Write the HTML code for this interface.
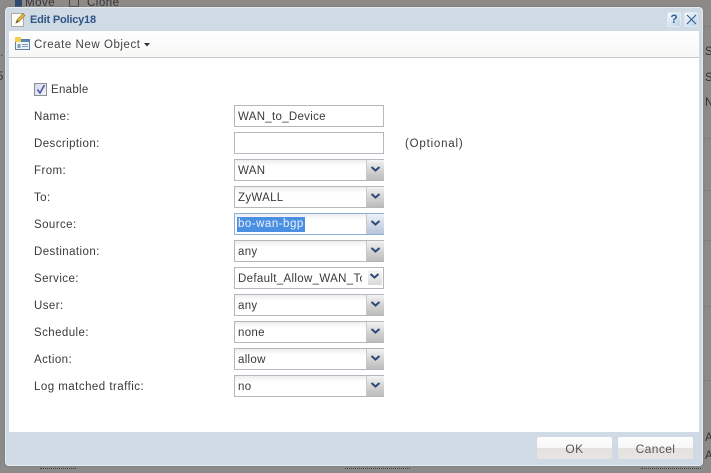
<!DOCTYPE html>
<html><head><meta charset="utf-8"><style>
html,body{margin:0;padding:0}
body{width:711px;height:473px;overflow:hidden;position:relative;background:#8b8b8b;font-family:"Liberation Sans",sans-serif;color:#333}
div,span{position:absolute;box-sizing:border-box;white-space:nowrap}
.lb{left:34px;font-size:11.5px;line-height:14px;letter-spacing:.42px;color:#3a3a3a}
.f{left:234px;width:150px;height:22px;background:#fff;border:1px solid #b4b8bc;font-size:11.5px;line-height:22px;padding-left:3px;letter-spacing:.3px;color:#3a3a3a}
.s{background:linear-gradient(#eeeeee,#fff 30%)}
.a{left:131px;top:0;width:18px;height:20px;background:linear-gradient(#f2f3f4,#d4d4d4 50%,#bcbcbc);border-left:1px solid #c8c8c8}
.a svg{position:absolute;left:3px;top:4px}
.sel{border-color:#8fb0d6}
.b{top:437px;height:22px;width:75px;border-radius:2px;background:linear-gradient(#fdfdfd 0,#f7f7f7 50%,#e4e2df 50%,#e7e5e2);text-align:center;font-size:12px;line-height:24px;letter-spacing:.4px;color:#555}
.d{height:0;border-top:1px dotted #3f3f3f;top:468px}
.r{left:704px;width:7px;height:1px;background:#7f7f7f}
.e{font-size:11.5px;line-height:14px;color:#333}
</style></head><body>
<div style="left:0;top:0;width:711px;height:8px;background:#8d8a88"></div>
<span style="left:25px;top:-4px;font-size:11.5px;line-height:14px;color:#333;letter-spacing:.5px">Move</span>
<span style="left:87px;top:-4px;font-size:11.5px;line-height:14px;color:#333;letter-spacing:.5px">Clone</span>
<div style="left:15px;top:0;width:7px;height:7px;background:#2d4a6e"></div>
<div style="left:69px;top:0;width:10px;height:7px;border:1px solid #444;border-top:0"></div>
<span class="e" style="left:0;top:46px;color:#444">.</span>
<span class="e" style="left:-3px;top:70px;color:#333">5</span>
<div class="d" style="left:40px;width:36px"></div>
<div class="d" style="left:345px;width:65px"></div>
<div class="d" style="left:641px;width:60px"></div>
<div class="r" style="top:26px"></div>
<div class="r" style="top:138px"></div>
<div class="r" style="top:190px"></div>
<div class="r" style="top:240px"></div>
<div class="r" style="top:306px"></div>
<div class="r" style="top:380px"></div>
<span class="e" style="left:705px;top:45px">S</span>
<span class="e" style="left:705px;top:71px">S</span>
<span class="e" style="left:705px;top:96px">N</span>
<span class="e" style="left:705px;top:431px">A</span>
<span class="e" style="left:705px;top:449px">A</span>

<div style="left:5px;top:7px;width:698px;height:459px;background:#cfdae4;border:1px solid #e6ebf0;border-radius:4px;box-shadow:0 0 2px #777"></div>

<!-- title -->
<svg style="position:absolute;left:11px;top:12px" width="15" height="15" viewBox="0 0 15 15"><rect x=".5" y="1.500" width="12" height="13" fill="#fdfbf2" stroke="#aaa"/><path d="M5 11l1-3 6-6.500 2 2-6 6z" fill="#e6b93c" stroke="#a07a20" stroke-width=".7"/><path d="M5 11l1-3 2 1.500z" fill="#555"/></svg>
<span style="left:30px;top:13px;font-size:11px;line-height:14px;font-weight:bold;color:#2f5587;letter-spacing:-.2px">Edit Policy18</span>
<div style="left:667px;top:12px;width:14px;height:15px;border-radius:2px;background:linear-gradient(135deg,#f4f8fc,#bcd4ea);border:1px solid #dfe9f2;font-size:12px;line-height:13px;font-weight:bold;text-align:center;color:#3a5f8e">?</div>
<div style="left:684px;top:12px;width:14px;height:15px;border-radius:2px;background:linear-gradient(135deg,#f4f8fc,#bcd4ea);border:1px solid #dfe9f2"><svg style="position:absolute;left:1px;top:1px" width="11" height="11" viewBox="0 0 11 11"><path d="M1 1l9 9M10 1l-9 9" stroke="#2f5587" stroke-width="1"/></svg></div>

<!-- toolbar -->
<div style="left:9px;top:31px;width:690px;height:27px;background:linear-gradient(#fff,#f8f7f6);border-bottom:1px solid #c9c8c6"></div>
<svg style="position:absolute;left:15px;top:37px" width="15" height="13" viewBox="0 0 15 13"><rect x=".5" y="2.500" width="14" height="10" fill="#eef3f8" stroke="#5a7fa8"/><rect x="1" y="3" width="13" height="2" fill="#5a86b4"/><rect x="2.500" y="7" width="3" height="4" fill="#7d9dc0"/><path d="M7 7.500h6M7 9.500h6" stroke="#7d9dc0"/><rect x="0" y="0" width="6" height="5" fill="#f2d04a"/></svg>
<span style="left:34px;top:38px;font-size:11.5px;line-height:14px;letter-spacing:.55px;color:#444">Create New Object</span>
<svg style="position:absolute;left:144px;top:43px" width="6" height="4"><path d="M0 0h6L3 3.500z" fill="#333"/></svg>

<!-- content -->
<div style="left:9px;top:58px;width:690px;height:374px;background:#fff"></div>

<div style="left:34px;top:83px;width:13px;height:13px;background:linear-gradient(135deg,#d7d9ea,#f2f3fa);border:1px solid #8a8e96"><svg style="position:absolute;left:1px;top:0" width="10" height="11" viewBox="0 0 10 11"><path d="M1.500 5.500l2.500 3.500 4.500-8" fill="none" stroke="#4a5aa8" stroke-width="1.600"/></svg></div>
<span class="lb" style="left:51px;top:83px;letter-spacing:.3px">Enable</span>

<span class="lb" style="top:110px">Name:</span>
<span class="lb" style="top:137px">Description:</span>
<span class="lb" style="top:164px">From:</span>
<span class="lb" style="top:191px">To:</span>
<span class="lb" style="top:218px">Source:</span>
<span class="lb" style="top:245px">Destination:</span>
<span class="lb" style="top:272px">Service:</span>
<span class="lb" style="top:299px">User:</span>
<span class="lb" style="top:326px">Schedule:</span>
<span class="lb" style="top:353px">Action:</span>
<span class="lb" style="top:380px;letter-spacing:.47px">Log matched traffic:</span>

<div class="f" style="top:105px">WAN_to_Device</div>
<div class="f" style="top:132px"></div>
<span class="lb" style="left:405px;top:137px;letter-spacing:.8px">(Optional)</span>

<div class="f s" style="top:159px">WAN<div class="a"><svg width="11" height="10" viewBox="0 0 11 10"><path d="M1.500 3l4 3.500 4-3.500" fill="none" stroke="#2f4a78" stroke-width="2"/></svg></div></div>
<div class="f s" style="top:186px">ZyWALL<div class="a"><svg width="11" height="10" viewBox="0 0 11 10"><path d="M1.500 3l4 3.500 4-3.500" fill="none" stroke="#2f4a78" stroke-width="2"/></svg></div></div>
<div class="f s sel" style="top:213px"><span style="left:2px;top:3px;height:15px;background:#4a90e2;color:#eaf1fb;line-height:15px;padding:0 1px;letter-spacing:.5px">bo-wan-bgp</span><div class="a" style="background:linear-gradient(#eef3f8,#d0dbe7 50%,#b4c5d8)"><svg width="11" height="10" viewBox="0 0 11 10"><path d="M1.500 3l4 3.500 4-3.500" fill="none" stroke="#2f4a78" stroke-width="2"/></svg></div></div>
<div class="f s" style="top:240px">any<div class="a"><svg width="11" height="10" viewBox="0 0 11 10"><path d="M1.500 3l4 3.500 4-3.500" fill="none" stroke="#2f4a78" stroke-width="2"/></svg></div></div>
<div class="f s" style="top:267px;overflow:hidden;background:#fff"><span style="left:3px;top:0;width:124px;overflow:hidden;letter-spacing:.33px">Default_Allow_WAN_To_</span><div class="a" style="left:133px;top:2px;width:14px;height:15px;background:linear-gradient(#f6f7f8,#d9d9d9);border:0"><svg style="left:1px;top:1px" width="11" height="10" viewBox="0 0 11 10"><path d="M1.500 3l4 3.500 4-3.500" fill="none" stroke="#2f4a78" stroke-width="2"/></svg></div></div>
<div class="f s" style="top:294px">any<div class="a"><svg width="11" height="10" viewBox="0 0 11 10"><path d="M1.500 3l4 3.500 4-3.500" fill="none" stroke="#2f4a78" stroke-width="2"/></svg></div></div>
<div class="f s" style="top:321px">none<div class="a"><svg width="11" height="10" viewBox="0 0 11 10"><path d="M1.500 3l4 3.500 4-3.500" fill="none" stroke="#2f4a78" stroke-width="2"/></svg></div></div>
<div class="f s" style="top:348px">allow<div class="a"><svg width="11" height="10" viewBox="0 0 11 10"><path d="M1.500 3l4 3.500 4-3.500" fill="none" stroke="#2f4a78" stroke-width="2"/></svg></div></div>
<div class="f s" style="top:375px">no<div class="a"><svg width="11" height="10" viewBox="0 0 11 10"><path d="M1.500 3l4 3.500 4-3.500" fill="none" stroke="#2f4a78" stroke-width="2"/></svg></div></div>

<!-- buttons -->
<div class="b" style="left:537px">OK</div>
<div class="b" style="left:618px">Cancel</div>
</body></html>
